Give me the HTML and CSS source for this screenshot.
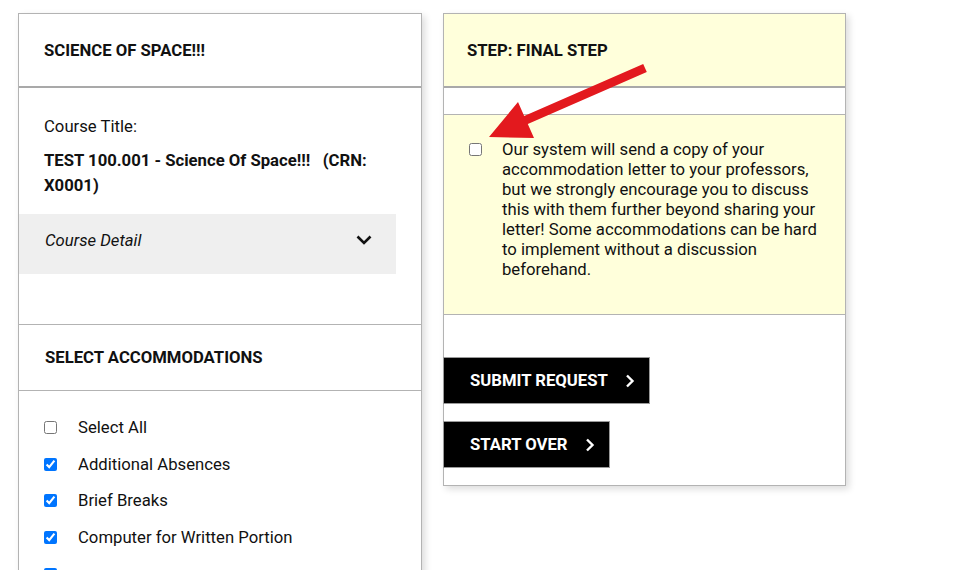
FILE: index.html
```html
<!DOCTYPE html>
<html lang="en">
<head>
<meta charset="utf-8">
<title>Accommodation Request</title>
<link rel="stylesheet" href="styles.css">
</head>
<body>
<div class="page">
  <section class="card card-left">
    <div class="card-head">Science of Space!!!</div>
    <div class="course">
      <div class="course-label">Course Title:</div>
      <div class="course-title">TEST 100.001 - Science Of Space!!! &nbsp; (CRN: X0001)</div>
      <div class="accordion">
        <span class="accordion-label">Course Detail</span>
        <svg class="chev-down" width="16" height="10" viewBox="0 0 16 10"><path d="M1.5 1.5 L8 8 L14.5 1.5" fill="none" stroke="#111" stroke-width="2.6"/></svg>
      </div>
    </div>
    <div class="section-head">Select Accommodations</div>
    <ul class="acc-list">
      <li><input type="checkbox"><span>Select All</span></li>
      <li><input type="checkbox" checked><span>Additional Absences</span></li>
      <li><input type="checkbox" checked><span>Brief Breaks</span></li>
      <li><input type="checkbox" checked><span>Computer for Written Portion</span></li>
      <li><input type="checkbox" checked aria-label="More accommodations"></li>
    </ul>
  </section>

  <section class="card card-right">
    <div class="card-head yellow">Step: Final Step</div>
    <div class="strip"></div>
    <div class="notice">
      <input type="checkbox">
      <p>Our system will send a copy of your accommodation letter to your professors, but we strongly encourage you to discuss this with them further beyond sharing your letter! Some accommodations can be hard to implement without a discussion beforehand.</p>
    </div>
    <div class="actions">
      <button class="btn btn-submit">Submit Request <svg class="chev" width="10" height="14" viewBox="0 0 10 14"><path d="M2 1.5 L7.5 7 L2 12.5" fill="none" stroke="#fff" stroke-width="2.4"/></svg></button>
      <button class="btn btn-over">Start Over <svg class="chev" width="10" height="14" viewBox="0 0 10 14"><path d="M2 1.5 L7.5 7 L2 12.5" fill="none" stroke="#fff" stroke-width="2.4"/></svg></button>
    </div>
  </section>

  <svg class="arrow" width="979" height="570" viewBox="0 0 979 570">
    <polygon points="489,137 518,102 524.2,115.9 643.2,63.9 646.8,72.1 527.8,124.1 534,138" fill="#e3191e"/>
  </svg>
</div>
</body>
</html>
```

FILE: styles.css
```css
html, body {
  margin: 0;
  padding: 0;
  background: #ffffff;
  font-family: Roboto, "Liberation Sans", Arial, sans-serif;
  color: #111;
  font-size: 16.7px;
}

.page {
  display: flex;
  align-items: flex-start;
  gap: 21px;
  padding: 13px 0 0 18px;
  height: 557px;
  overflow: hidden;
}

.card {
  background: #fff;
  border: 1px solid #b3b3b3;
  box-shadow: 3px 3px 7px rgba(0, 0, 0, 0.14);
}

.card-left { width: 402px; }
.card-right { width: 401px; }

.card-head {
  height: 72px;
  display: flex;
  align-items: center;
  padding: 0 25px;
  border-bottom: 2px solid #a9a9a9;
  font-weight: 700;
  font-size: 16.7px;
  text-transform: uppercase;
  color: #111;
}

.card-head.yellow {
  background: #ffffdb;
  padding-left: 23px;
}

.course {
  padding: 29px 25px 0 0;
  height: 237px;
  box-sizing: border-box;
  border-bottom: 1px solid #b3b3b3;
}

.course-label {
  padding-left: 25px;
  line-height: 20px;
}

.course-title {
  padding-left: 25px;
  margin-top: 11px;
  font-weight: 700;
  line-height: 25px;
}

.accordion {
  margin-top: 16px;
  height: 60px;
  box-sizing: border-box;
  background: #efefef;
  display: flex;
  align-items: center;
  justify-content: space-between;
  padding: 0 24px 8px 26px;
}

.accordion-label {
  font-style: italic;
}

.chev-down { display: block; }

.section-head {
  height: 65px;
  display: flex;
  align-items: center;
  padding: 0 26px;
  border-bottom: 1px solid #b3b3b3;
  font-weight: 700;
  font-size: 16.7px;
  text-transform: uppercase;
}

.acc-list {
  list-style: none;
  margin: 0;
  padding: 18px 0 0 25px;
}

.acc-list li {
  display: flex;
  align-items: center;
  height: 36.8px;
}

.acc-list input,
.notice input {
  margin: 0;
  width: 13px;
  height: 13px;
  flex: none;
}

.acc-list span {
  margin-left: 21px;
}

.strip {
  height: 26px;
  border-bottom: 1px solid #b3b3b3;
}

.notice {
  background: #ffffdb;
  display: flex;
  align-items: flex-start;
  padding: 25px 22px 34px 25px;
  border-bottom: 1px solid #b3b3b3;
}

.notice input {
  margin-top: 3px;
}

.notice p {
  margin: 0 0 0 20px;
  line-height: 20px;
}

.actions {
  display: flex;
  flex-direction: column;
  align-items: flex-start;
  gap: 17px;
  padding: 42px 0 17px 0;
  margin-left: -1px;
}

.btn {
  display: flex;
  align-items: center;
  height: 47px;
  padding: 0 14px 0 26px;
  background: #000;
  color: #fff;
  border: 1px solid #9a9a9a;
  font-family: Roboto, "Liberation Sans", Arial, sans-serif;
  font-weight: 700;
  font-size: 16.7px;
  text-transform: uppercase;
  cursor: pointer;
}

.btn .chev {
  margin-left: 17px;
  display: block;
}

.arrow {
  position: absolute;
  left: 0;
  top: 0;
  pointer-events: none;
}
```
